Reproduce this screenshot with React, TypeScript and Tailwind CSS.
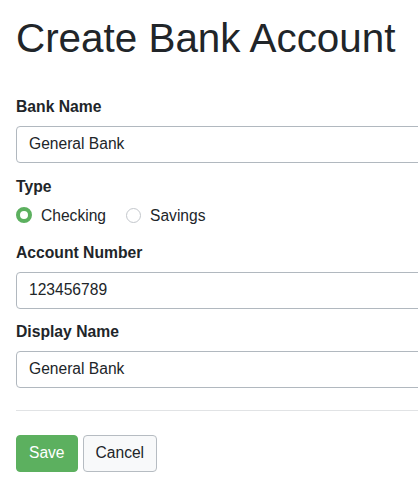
import { useState } from 'react';

const FONT = { fontFamily: '"Liberation Sans", Arial, Helvetica, sans-serif' };

function Field({ label, value }: { label: string; value: string }) {
  return (
    <div>
      <label className="block text-[15.7px] leading-[23px] font-bold text-[#212529]">{label}</label>
      <input
        defaultValue={value}
        className="mt-[8px] block h-[37px] w-full rounded-[4px] border border-[#b1b8bf] bg-white px-[12px] text-[15.6px] text-[#212529] outline-none"
      />
    </div>
  );
}

function Radio({ checked, label, onClick }: { checked: boolean; label: string; onClick: () => void }) {
  return (
    <button type="button" onClick={onClick} className="flex items-center gap-[9px] text-[15.6px] leading-[23px] text-[#212529]">
      {checked ? (
        <span className="h-[16px] w-[16px] rounded-full border-[4px] border-[#5cb05f] bg-white" />
      ) : (
        <span className="h-[15px] w-[15px] rounded-full border border-[#c3c7cc] bg-white" />
      )}
      <span>{label}</span>
    </button>
  );
}

export default function App() {
  const [type, setType] = useState<'checking' | 'savings'>('checking');

  return (
    <div className="h-[482px] w-[418px] overflow-hidden bg-white pl-[16px]" style={FONT}>
      <div className="w-[560px]">
        <h1 className="pt-[15px] text-[40.4px] leading-[47.5px] font-normal text-[#212529]">Create Bank Account</h1>

        <div className="mt-[32px]">
          <Field label="Bank Name" value="General Bank" />
        </div>

        {/* Account type */}
        <div className="mt-[12px]">
          <div className="text-[15.7px] leading-[23px] font-bold text-[#212529]">Type</div>
          <div className="mt-[6px] flex items-center gap-[20px]">
            <Radio checked={type === 'checking'} label="Checking" onClick={() => setType('checking')} />
            <Radio checked={type === 'savings'} label="Savings" onClick={() => setType('savings')} />
          </div>
        </div>

        <div className="mt-[14px]">
          <Field label="Account Number" value="123456789" />
        </div>

        <div className="mt-[11px]">
          <Field label="Display Name" value="General Bank" />
        </div>

        <hr className="mt-[22px] border-t border-[#e1e3e5]" />

        <div className="mt-[24px] flex gap-[5px]">
          <button className="h-[37px] rounded-[4px] border border-[#5cb05f] bg-[#5cb05f] px-[12px] text-[15.6px] text-white">
            Save
          </button>
          <button className="h-[37px] rounded-[4px] border border-[#b6bcc2] bg-[#f8f9fa] px-[12px] text-[15.6px] text-[#212529]">
            Cancel
          </button>
        </div>
      </div>
    </div>
  );
}
